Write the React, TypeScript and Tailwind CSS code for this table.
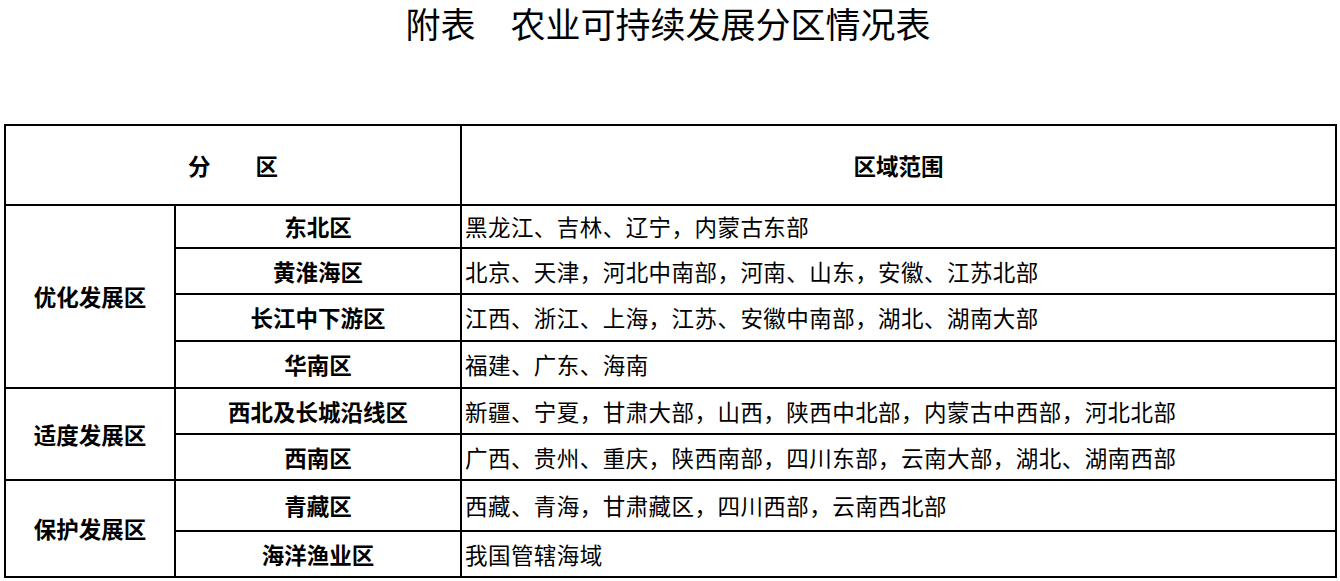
const rows: { group?: string; span?: number; name: string; scope: string; h: number }[] = [
  { group: '优化发展区', span: 4, name: '东北区', scope: '黑龙江、吉林、辽宁，内蒙古东部', h: 43 },
  { name: '黄淮海区', scope: '北京、天津，河北中南部，河南、山东，安徽、江苏北部', h: 46 },
  { name: '长江中下游区', scope: '江西、浙江、上海，江苏、安徽中南部，湖北、湖南大部', h: 47 },
  { name: '华南区', scope: '福建、广东、海南', h: 47 },
  { group: '适度发展区', span: 2, name: '西北及长城沿线区', scope: '新疆、宁夏，甘肃大部，山西，陕西中北部，内蒙古中西部，河北北部', h: 46 },
  { name: '西南区', scope: '广西、贵州、重庆，陕西南部，四川东部，云南大部，湖北、湖南西部', h: 46 },
  { group: '保护发展区', span: 2, name: '青藏区', scope: '西藏、青海，甘肃藏区，四川西部，云南西北部', h: 51 },
  { name: '海洋渔业区', scope: '我国管辖海域', h: 46 },
]

const cell = 'border-2 border-black'

export default function App() {
  return (
    <div className="w-[1340px] h-[581px] bg-white text-black font-['Noto_Sans_CJK_SC','Noto_Sans',sans-serif] overflow-hidden pt-[4px]">
      <h1 className="h-[38px] pr-[4px] flex items-center justify-center text-[35px] leading-[38px] font-normal">
        附表　农业可持续发展分区情况表
      </h1>
      <table className="mt-[82px] ml-[4px] w-[1333px] table-fixed border-collapse text-[22.5px] leading-none">
        <colgroup>
          <col className="w-[170px]" />
          <col className="w-[286px]" />
          <col />
        </colgroup>
        <thead>
          <tr className="h-[80px]">
            <th colSpan={2} className={`${cell} font-bold text-center`}>
              分　　区
            </th>
            <th className={`${cell} font-bold text-center`}>区域范围</th>
          </tr>
        </thead>
        <tbody>
          {rows.map((r) => (
            <tr key={r.name} style={{ height: r.h }}>
              {r.group && (
                <td rowSpan={r.span} className={`${cell} font-bold text-center`}>
                  {r.group}
                </td>
              )}
              <td className={`${cell} font-bold text-center`}>{r.name}</td>
              <td className={`${cell} pl-[3px] text-left font-normal tracking-[0.45px]`}>{r.scope}</td>
            </tr>
          ))}
        </tbody>
      </table>
    </div>
  )
}
